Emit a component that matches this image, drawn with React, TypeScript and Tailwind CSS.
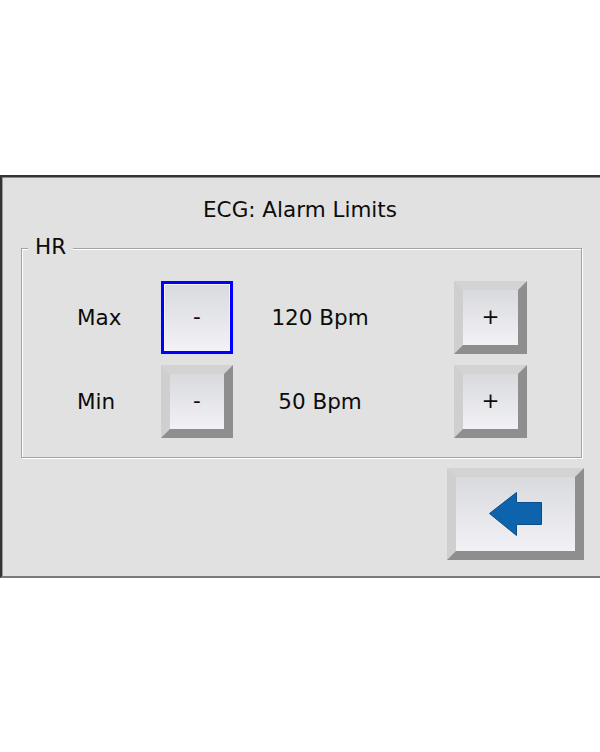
import React from "react";

const face = "bg-gradient-to-b from-[#d9dadd] to-[#f2f2f6]";

function BevelButton({
  children,
  className = "",
}: {
  children: React.ReactNode;
  className?: string;
}) {
  return (
    <div
      className={`box-border flex items-center justify-center border-[9px] border-t-[#d3d3d3] border-l-[#cfcfcf] border-r-[#8e8e8e] border-b-[#8e8e8e] ${face} ${className}`}
    >
      {children}
    </div>
  );
}

function FocusButton({
  children,
  className = "",
}: {
  children: React.ReactNode;
  className?: string;
}) {
  return (
    <div
      className={`box-border flex items-center justify-center border-[3px] border-[#0000ff] shadow-[inset_0_0_0_1px_#f4f4f4] ${face} ${className}`}
    >
      {children}
    </div>
  );
}

function Row({
  label,
  value,
  focused,
}: {
  label: string;
  value: string;
  focused?: boolean;
}) {
  const Minus = focused ? FocusButton : BevelButton;
  return (
    <div className="flex h-[73px] items-center pl-[55px]">
      <div className="w-[84px]">{label}</div>
      <Minus className="h-[73px] w-[72px]">
        <span className="pb-[2px]">-</span>
      </Minus>
      <div className="w-[174px] text-center">{value}</div>
      <BevelButton className="ml-[47px] h-[73px] w-[73px]">
        <span className="pb-[2px]">+</span>
      </BevelButton>
    </div>
  );
}

export default function App() {
  return (
    <div
      className="flex h-[752px] w-[600px] flex-col bg-white text-[21.5px] leading-[26px] text-[#0c0c0c]"
      style={{ fontFamily: '"DejaVu Sans", sans-serif' }}
    >
      <div className="h-[175px] shrink-0" />
      <div className="box-border flex flex-col border-t-2 border-l-2 border-b-2 border-t-[#333333] border-l-[#333333] border-b-[#7a7a7a] bg-[#e1e1e1] shadow-[inset_0_1px_0_#8a8a8a,inset_1px_0_0_#9a9a9a]">
        <div className="mt-[20px] h-[26px] pr-[2px] text-center">ECG: Alarm Limits</div>

        <div className="relative ml-[19px] mt-[25px] box-border h-[210px] w-[561px] border border-[#a3a3a3] pt-[32px] shadow-[1px_1px_0_#ffffff,inset_1px_1px_0_#ffffff]">
          <span className="absolute left-[6px] top-[-15px] bg-[#e1e1e1] px-[7px]">
            HR
          </span>
          <div className="flex flex-col gap-[11px]">
            <Row label="Max" value="120 Bpm" focused />
            <Row label="Min" value="50 Bpm" />
          </div>
        </div>

        <div className="mt-[10px] mb-[16px] mr-[16px] flex justify-end">
          <BevelButton className="h-[92px] w-[137px]">
            <svg width="55" height="46" viewBox="0 0 55 46">
              <path
                d="M1.5 22.5 L28.5 1.5 L28.5 11.5 L53.5 11.5 L53.5 33.5 L28.5 33.5 L28.5 44.5 Z"
                fill="#0d64ad"
                stroke="#0a4d88"
                strokeWidth="1"
                strokeLinejoin="round"
              />
            </svg>
          </BevelButton>
        </div>
      </div>
    </div>
  );
}
